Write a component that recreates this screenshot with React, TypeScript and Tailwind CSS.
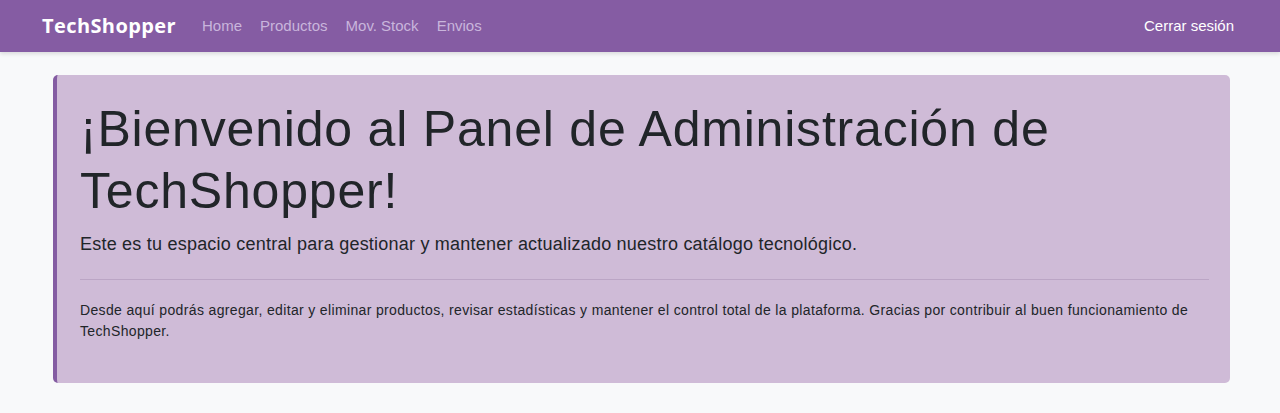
export default function App() {
  return (
    <div className="min-h-[413px] bg-[#f8f9fa]" style={{ fontFamily: '"Liberation Sans", Arial, sans-serif' }}>
      <nav className="h-[52px] bg-[#855ca3] shadow-[0_2px_4px_rgba(0,0,0,0.12)] flex items-center justify-between pl-[42px] pr-[46px]">
        <div className="flex items-center">
          <span className="text-white font-bold text-[20px] tracking-[0.4px] mr-[26px]" style={{ fontFamily: '"Open Sans", sans-serif' }}>TechShopper</span>
          <div className="flex items-center gap-[18px] text-[15px] text-[#c9b5dc]">
            <span>Home</span>
            <span>Productos</span>
            <span>Mov. Stock</span>
            <span>Envios</span>
          </div>
        </div>
        <span className="text-white text-[15px]">Cerrar sesión</span>
      </nav>
      <div className="px-[50px] pt-[23px]">
        <div className="ml-[3px] w-[1177px] h-[308px] bg-[#cfbbd7] border-l-4 border-[#845ca2] rounded-[5px] pl-[23px] pr-[21px] pt-[23px] text-[#212529]">
          <h1 className="text-[50px] leading-[62px] tracking-[0.8px] font-normal">¡Bienvenido al Panel de Administración de TechShopper!</h1>
          <p className="text-[18px] leading-[28px] tracking-[0.22px] mt-[8px]">Este es tu espacio central para gestionar y mantener actualizado nuestro catálogo tecnológico.</p>
          <hr className="mt-[21px] border-t border-[#bba5c5]" />
          <p className="mt-[20px] text-[14px] leading-[21px] tracking-[0.35px]">Desde aquí podrás agregar, editar y eliminar productos, revisar estadísticas y mantener el control total de la plataforma. Gracias por contribuir al buen funcionamiento de TechShopper.</p>
        </div>
      </div>
    </div>
  );
}
